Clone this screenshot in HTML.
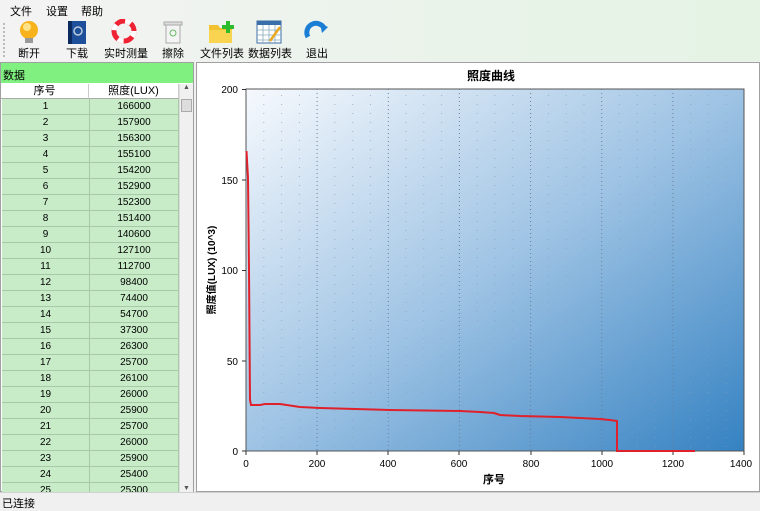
<!DOCTYPE html>
<html><head><meta charset="utf-8"><style>
*{margin:0;padding:0;box-sizing:border-box}
body{width:760px;height:509px;overflow:hidden;background:#f0f0f0;font-family:"Liberation Sans","Noto Sans CJK SC",sans-serif;font-size:11px;color:#000;position:relative}
.menu{position:absolute;left:0;top:0;width:760px;height:19px;background:linear-gradient(90deg,#f3f3f3,#eaf3ea 60%,#e4f3e4)}
.menu span{position:absolute;top:3px;font-size:11px}
.tb{position:absolute;left:0;top:19px;width:760px;height:42px;background:linear-gradient(90deg,#f3f3f3,#eaf3ea 60%,#e4f3e4)}
.btn{position:absolute;top:0;text-align:center;font-size:11px}
.btn .lbl{position:absolute;top:26px;left:0;width:100%;white-space:nowrap}
.left{position:absolute;left:0;top:62px;width:194px;height:430px;background:#fff;border:1px solid #a0a0a0}
.gbar{position:absolute;left:0;top:0;width:192px;height:20px;background:#80f080;font-size:11px;padding:4px 0 0 2px}
.th{position:absolute;top:21px;height:15px;background:#fff;text-align:center;font-size:11px;border-right:1px solid #ccc;border-bottom:1px solid #aaa;line-height:14px}
.rows{position:absolute;left:1px;top:36px;width:177px;height:393px;overflow:hidden}
.r{height:16px;display:flex;border-bottom:1px solid #a8c8a8;background:#c8ecc8}
.r div{text-align:center;line-height:15px;font-size:10px;border-right:1px solid #a8c8a8}
.sb{position:absolute;left:178px;top:21px;width:14px;height:408px;background:#f0f0f0;border-left:1px solid #ddd}
.chart{position:absolute;left:196px;top:62px;width:564px;height:430px;background:#fff;border:1px solid #a0a0a0}
.status{position:absolute;left:0;top:492px;width:760px;height:17px;background:#f0f0f0;border-top:1px solid #d0d0d0;font-size:11px;padding:2px 0 0 2px}
</style></head><body>
<div class="menu"><span style="left:10px">文件</span><span style="left:46px">设置</span><span style="left:81px">帮助</span></div>
<div class="tb">
<div style="position:absolute;left:3px;top:4px;width:2px;height:34px;border-left:2px dotted #bbb"></div>
<div class="btn" style="left:14px;width:30px"><svg width="30" height="26"><circle cx="15" cy="11" r="9" fill="#f7b21c"/><circle cx="13" cy="8" r="4" fill="#fde48a"/><rect x="11" y="19" width="8" height="5" fill="#999"/></svg><div class="lbl">断开</div></div>
<div class="btn" style="left:62px;width:30px"><svg width="30" height="26"><rect x="6" y="2" width="18" height="23" fill="#1d4f9a"/><rect x="6" y="2" width="4" height="23" fill="#0b2a60"/><circle cx="16" cy="12" r="4" fill="none" stroke="#bcd" stroke-width="1.5"/></svg><div class="lbl">下载</div></div>
<div class="btn" style="left:104px;width:40px"><svg width="40" height="26"><circle cx="20" cy="12" r="10" fill="none" stroke="#e23" stroke-width="5"/><circle cx="20" cy="12" r="10" fill="none" stroke="#fff" stroke-width="5" stroke-dasharray="6 10"/></svg><div class="lbl">实时测量</div></div>
<div class="btn" style="left:158px;width:30px"><svg width="30" height="26"><rect x="8" y="5" width="14" height="19" fill="#f4f4f4" stroke="#aaa"/><rect x="6" y="3" width="18" height="3" fill="#ddd" stroke="#aaa"/><circle cx="15" cy="14" r="3" fill="none" stroke="#6b6"/></svg><div class="lbl">擦除</div></div>
<div class="btn" style="left:200px;width:42px"><svg width="42" height="26"><path d="M9 6h9l2 3h12v15H9z" fill="#f2c230"/><rect x="9" y="11" width="23" height="13" fill="#f8d450"/><path d="M26 2h4v4h4v4h-4v4h-4v-4h-4v-4h4z" fill="#2bbb2b"/></svg><div class="lbl">文件列表</div></div>
<div class="btn" style="left:248px;width:42px"><svg width="42" height="26"><rect x="9" y="2" width="24" height="22" fill="#fff" stroke="#3a6ea8"/><rect x="9" y="2" width="24" height="4" fill="#3a6ea8"/><path d="M9 11h24M9 16h24M9 21h24M15 6v18M21 6v18M27 6v18" stroke="#8ab" stroke-width=".8"/><path d="M22 22l10-14" stroke="#e9a820" stroke-width="2.5"/></svg><div class="lbl">数据列表</div></div>
<div class="btn" style="left:302px;width:30px"><svg width="30" height="26"><path d="M6 18A9 9 0 0 1 22 9" fill="none" stroke="#1a7fd4" stroke-width="5"/><path d="M18 4l8 4-6 6z" fill="#1a7fd4"/></svg><div class="lbl">退出</div></div>
</div>
<div class="left">
<div class="gbar">数据</div>
<div class="th" style="left:0;width:88px">序号</div><div class="th" style="left:88px;width:90px">照度(LUX)</div>
<div class="rows">
<div class="r"><div style="width:88px">1</div><div style="width:89px">166000</div></div>
<div class="r"><div style="width:88px">2</div><div style="width:89px">157900</div></div>
<div class="r"><div style="width:88px">3</div><div style="width:89px">156300</div></div>
<div class="r"><div style="width:88px">4</div><div style="width:89px">155100</div></div>
<div class="r"><div style="width:88px">5</div><div style="width:89px">154200</div></div>
<div class="r"><div style="width:88px">6</div><div style="width:89px">152900</div></div>
<div class="r"><div style="width:88px">7</div><div style="width:89px">152300</div></div>
<div class="r"><div style="width:88px">8</div><div style="width:89px">151400</div></div>
<div class="r"><div style="width:88px">9</div><div style="width:89px">140600</div></div>
<div class="r"><div style="width:88px">10</div><div style="width:89px">127100</div></div>
<div class="r"><div style="width:88px">11</div><div style="width:89px">112700</div></div>
<div class="r"><div style="width:88px">12</div><div style="width:89px">98400</div></div>
<div class="r"><div style="width:88px">13</div><div style="width:89px">74400</div></div>
<div class="r"><div style="width:88px">14</div><div style="width:89px">54700</div></div>
<div class="r"><div style="width:88px">15</div><div style="width:89px">37300</div></div>
<div class="r"><div style="width:88px">16</div><div style="width:89px">26300</div></div>
<div class="r"><div style="width:88px">17</div><div style="width:89px">25700</div></div>
<div class="r"><div style="width:88px">18</div><div style="width:89px">26100</div></div>
<div class="r"><div style="width:88px">19</div><div style="width:89px">26000</div></div>
<div class="r"><div style="width:88px">20</div><div style="width:89px">25900</div></div>
<div class="r"><div style="width:88px">21</div><div style="width:89px">25700</div></div>
<div class="r"><div style="width:88px">22</div><div style="width:89px">26000</div></div>
<div class="r"><div style="width:88px">23</div><div style="width:89px">25900</div></div>
<div class="r"><div style="width:88px">24</div><div style="width:89px">25400</div></div>
<div class="r"><div style="width:88px">25</div><div style="width:89px">25300</div></div>
</div>
<div class="sb"><div style="position:absolute;left:1px;top:15px;width:11px;height:13px;background:#ddd;border:1px solid #aaa"></div><div style="position:absolute;top:0;left:3px;font-size:7px;color:#555">▲</div><div style="position:absolute;bottom:0;left:3px;font-size:7px;color:#555">▼</div></div>
</div>
<div class="chart">
<svg width="564" height="430" style="position:absolute;left:-197px;top:-63px;overflow:visible" viewBox="0 0 564 430">
</svg>
</div>
<svg width="760" height="509" style="position:absolute;left:0;top:0">
<defs><linearGradient id="g" x1="0" y1="0" x2="1" y2="1"><stop offset="0" stop-color="#f6f9fd"/><stop offset="0.5" stop-color="#9ec3e4"/><stop offset="1" stop-color="#3582c2"/></linearGradient></defs>
<rect x="246" y="89" width="498" height="362" fill="url(#g)" stroke="#555" stroke-width="1"/>
<g stroke="#6a7f99" stroke-width="1" stroke-dasharray="1 3">
<line x1="317.1" y1="89" x2="317.1" y2="451"/><line x1="388.3" y1="89" x2="388.3" y2="451"/><line x1="459.4" y1="89" x2="459.4" y2="451"/><line x1="530.6" y1="89" x2="530.6" y2="451"/><line x1="601.7" y1="89" x2="601.7" y2="451"/><line x1="672.9" y1="89" x2="672.9" y2="451"/>
</g>
<g stroke="#8aa0b8" stroke-width="1" stroke-dasharray="1 8" opacity=".7">
<line x1="263.8" y1="95" x2="263.8" y2="451"/><line x1="281.6" y1="95" x2="281.6" y2="451"/><line x1="299.4" y1="95" x2="299.4" y2="451"/><line x1="334.9" y1="95" x2="334.9" y2="451"/><line x1="352.7" y1="95" x2="352.7" y2="451"/><line x1="370.5" y1="95" x2="370.5" y2="451"/><line x1="406" y1="95" x2="406" y2="451"/><line x1="423.8" y1="95" x2="423.8" y2="451"/><line x1="441.6" y1="95" x2="441.6" y2="451"/><line x1="477.2" y1="95" x2="477.2" y2="451"/><line x1="495" y1="95" x2="495" y2="451"/><line x1="512.8" y1="95" x2="512.8" y2="451"/><line x1="548.4" y1="95" x2="548.4" y2="451"/><line x1="566.2" y1="95" x2="566.2" y2="451"/><line x1="584" y1="95" x2="584" y2="451"/><line x1="619.5" y1="95" x2="619.5" y2="451"/><line x1="637.3" y1="95" x2="637.3" y2="451"/><line x1="655.1" y1="95" x2="655.1" y2="451"/><line x1="690.6" y1="95" x2="690.6" y2="451"/><line x1="708.4" y1="95" x2="708.4" y2="451"/><line x1="726.2" y1="95" x2="726.2" y2="451"/>
</g>
<g stroke="#333" stroke-width="1">
<line x1="242" y1="89.5" x2="246" y2="89.5"/><line x1="242" y1="180" x2="246" y2="180"/><line x1="242" y1="270.5" x2="246" y2="270.5"/><line x1="242" y1="361" x2="246" y2="361"/><line x1="242" y1="451" x2="246" y2="451"/>
<line x1="246" y1="451" x2="246" y2="455"/><line x1="317" y1="451" x2="317" y2="455"/><line x1="388" y1="451" x2="388" y2="455"/><line x1="459" y1="451" x2="459" y2="455"/><line x1="531" y1="451" x2="531" y2="455"/><line x1="602" y1="451" x2="602" y2="455"/><line x1="673" y1="451" x2="673" y2="455"/><line x1="744" y1="451" x2="744" y2="455"/>
</g>
<polyline fill="none" stroke="#e0202a" stroke-width="2" points="246.5,151 248,178 249,270 250,400 251,405 260,405 265,404 280,404 300,407 320,408 390,410 460,411 480,412 494,413 500,415 520,416 560,417 600,419 610,420 617,421 617,451 695,451"/>
<g font-family="Liberation Sans,sans-serif" font-size="10" fill="#000" text-anchor="end">
<text x="238" y="93">200</text><text x="238" y="184">150</text><text x="238" y="274">100</text><text x="238" y="365">50</text><text x="238" y="455">0</text>
</g>
<g font-family="Liberation Sans,sans-serif" font-size="10" fill="#000" text-anchor="middle">
<text x="246" y="467">0</text><text x="317" y="467">200</text><text x="388" y="467">400</text><text x="459" y="467">600</text><text x="531" y="467">800</text><text x="602" y="467">1000</text><text x="673" y="467">1200</text><text x="741" y="467">1400</text>
</g>
<text x="491" y="80" font-family="Liberation Sans,'Noto Sans CJK SC',sans-serif" font-size="12" font-weight="bold" text-anchor="middle">照度曲线</text>
<text x="494" y="483" font-family="Liberation Sans,'Noto Sans CJK SC',sans-serif" font-size="11" font-weight="bold" text-anchor="middle">序号</text>
<text transform="translate(215,270) rotate(-90)" font-family="Liberation Sans,'Noto Sans CJK SC',sans-serif" font-size="10" font-weight="bold" text-anchor="middle">照度值(LUX) (10^3)</text>
</svg>
<div class="status">已连接</div>
</body></html>
